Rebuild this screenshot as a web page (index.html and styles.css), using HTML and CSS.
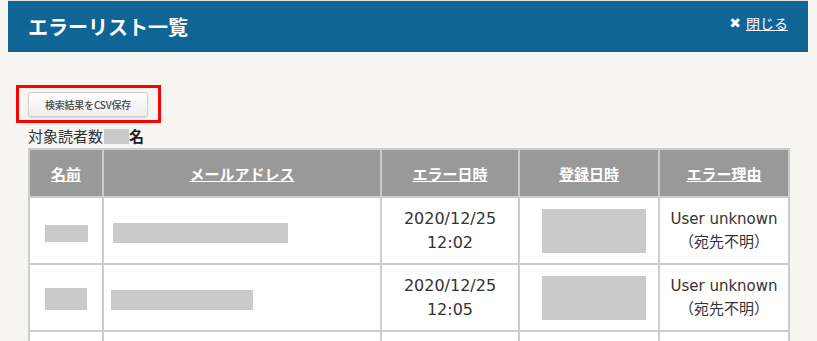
FILE: index.html
```html
<!DOCTYPE html>
<html lang="ja">
<head>
<meta charset="utf-8">
<title>エラーリスト一覧</title>
<link rel="stylesheet" href="styles.css">
</head>
<body>
<header class="head">
  <h1 class="title">エラーリスト一覧</h1>
  <a class="close" href="#"><span class="close-x">✖</span><span class="close-text">閉じる</span></a>
</header>
<main class="content">
  <div class="csv-frame"><button class="csv-btn" type="button">検索結果をCSV保存</button></div>
  <p class="count">対象読者数<span class="mask mask-count"></span><b>名</b></p>
  <table class="list">
    <colgroup>
      <col class="c-name"><col class="c-mail"><col class="c-err"><col class="c-reg"><col class="c-why">
    </colgroup>
    <thead>
      <tr><th><a href="#">名前</a></th><th><a href="#">メールアドレス</a></th><th><a href="#">エラー日時</a></th><th><a href="#">登録日時</a></th><th><a href="#">エラー理由</a></th></tr>
    </thead>
    <tbody>
      <tr>
        <td><span class="mask mask-name"></span></td>
        <td class="left"><span class="mask mask-mail1"></span></td>
        <td class="date">2020/12/25<br>12:02</td>
        <td class="reg"><span class="mask mask-reg"></span></td>
        <td class="why">User unknown<br>（宛先不明）</td>
      </tr>
      <tr>
        <td><span class="mask mask-name2"></span></td>
        <td class="left"><span class="mask mask-mail2"></span></td>
        <td class="date">2020/12/25<br>12:05</td>
        <td class="reg"><span class="mask mask-reg"></span></td>
        <td class="why">User unknown<br>（宛先不明）</td>
      </tr>
      <tr class="rest">
        <td></td>
        <td></td>
        <td></td>
        <td></td>
        <td></td>
      </tr>
    </tbody>
  </table>
</main>
</body>
</html>
```

FILE: styles.css
```css
html {
  background: #f6f5f1;
}
body {
  margin: 0 9px 0 8px;
  border-top: 1px solid #e2e2e2;
  font-family: "Noto Sans CJK JP", "Noto Sans", sans-serif;
  color: #333;
}
.head {
  background: #106597;
  height: 51px;
  display: flex;
  align-items: center;
  justify-content: space-between;
  padding: 0 20px;
}
.title {
  margin: 0;
  font-size: 20px;
  font-weight: bold;
  color: #fff;
  line-height: 1;
  padding-top: 1px;
}
.close {
  color: #fff;
  font-size: 14px;
  display: flex;
  align-items: center;
  gap: 5px;
  margin-top: -7px;
  text-decoration: none;
}
.close-x {
  font-size: 14px;
  font-weight: bold;
  font-family: "DejaVu Sans", sans-serif;
}
.close-text {
  text-decoration: underline;
}
.content {
  padding: 33px 0 0 0;
}
.csv-frame {
  display: inline-block;
  margin-left: 8px;
  border: 3px solid #f00;
  padding: 4px 10px 3px 9px;
  width: 120px;
}
.csv-btn {
  display: block;
  width: 120px;
  height: 25px;
  padding: 0;
  border: 1px solid #cfcfcf;
  border-radius: 3px;
  background: linear-gradient(#ffffff, #eeeeee);
  box-shadow: 0 1px 1px rgba(0,0,0,0.12);
  font-family: "Noto Sans CJK JP", sans-serif;
  font-size: 10px;
  font-weight: 500;
  color: #4a4a4a;
  letter-spacing: -0.2px;
}
.count {
  margin: 0 0 0 20px;
  font-size: 15px;
  line-height: 22px;
  height: 25px;
  display: flex;
  align-items: center;
}
.count b {
  font-weight: bold;
  color: #222;
}
.mask {
  display: inline-block;
  background: #cacaca;
  vertical-align: middle;
}
.mask-count {
  width: 25px;
  height: 15px;
  margin-top: 2px;
  margin-left: 1px;
}
.list {
  margin-left: 20px;
  width: 760px;
  border-collapse: collapse;
  table-layout: fixed;
  background: #fff;
}
.c-name { width: 74px; }
.c-mail { width: 278px; }
.c-err { width: 138px; }
.c-reg { width: 140px; }
.c-why { width: 130px; }
.list th, .list td {
  border: 2px solid #cccccc;
  text-align: center;
  vertical-align: middle;
}
.list th {
  background: #999;
  height: 46px;
  padding: 0;
  font-size: 15px;
  font-weight: bold;
}
.list th a {
  color: #fff;
  text-decoration: underline;
}
.list td {
  height: 65px;
  padding: 0 8px;
  font-size: 16px;
  line-height: 24px;
  color: #333;
}
.list td.date {
  font-family: "DejaVu Sans", "Noto Sans CJK JP", sans-serif;
  font-size: 16px;
}
.list td.reg {
  padding: 0 0 0 10px;
}
.list td.left {
  text-align: left;
}
.list td.why {
  font-family: "DejaVu Sans", "Noto Sans CJK JP", sans-serif;
  font-size: 15px;
  line-height: 23px;
  padding: 0;
}
.mask-name { width: 43px; height: 17px; }
.mask-name2 { width: 42px; height: 22px; }
.mask-mail1 { width: 175px; height: 20px; margin-left: 1px; }
.mask-mail2 { width: 142px; height: 20px; margin-left: -1px; }
.mask-reg { width: 104px; height: 44px; }
```
